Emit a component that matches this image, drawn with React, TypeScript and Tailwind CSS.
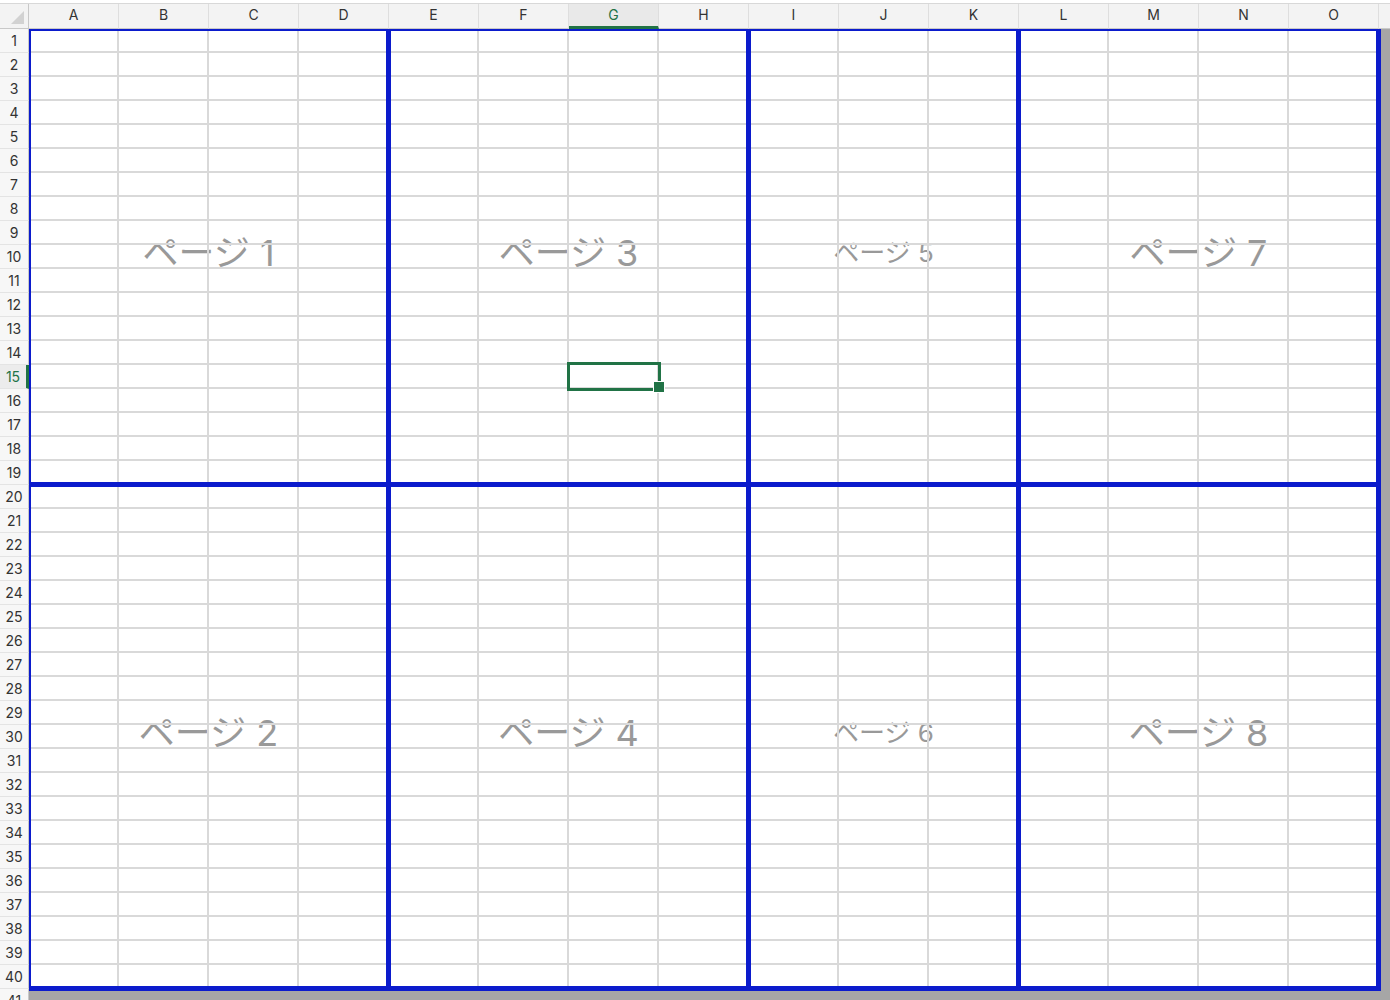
import React from 'react';

const COLS = 'ABCDEFGHIJKLMNO'.split('');
const ROW_COUNT = 41;
const SEL_ROW = 15;
const SEL_COL = 6; // G

// page grid: columns A-D, E-H, I-K, L-O ; rows 1-19, 20-40
const PAGES = [
  { n: 1, small: false }, { n: 3, small: false }, { n: 5, small: true }, { n: 7, small: false },
  { n: 2, small: false }, { n: 4, small: false }, { n: 6, small: true }, { n: 8, small: false },
];

function Corner() {
  return (
    <div className="relative w-[29px] shrink-0 border-r border-b border-[#c8c8c8] bg-[#f3f3f3]">
      <svg className="absolute right-[4px] bottom-[4px]" width="13" height="13" viewBox="0 0 13 13">
        <polygon points="13,0 13,13 0,13" fill="#d2d2d2" />
      </svg>
    </div>
  );
}

function ColumnHeader() {
  return (
    <div className="mt-[3px] h-[26px] shrink-0 flex border-t border-[#d8d8d8] bg-[#f3f3f3]">
      <Corner />
      {COLS.map((c, i) =>
        i === SEL_COL ? (
          <div
            key={c}
            className="w-[90px] shrink-0 flex items-center justify-center pb-[1px] border-r border-[#dedede] border-b-[3px] border-b-[#217346] bg-[#e9e9e9] text-[14px] text-[#217346]"
          >
            {c}
          </div>
        ) : (
          <div
            key={c}
            className="w-[90px] shrink-0 flex items-center justify-center pb-[3px] border-r border-[#dedede] border-b border-b-[#c8c8c8] text-[14px] text-[#333]"
          >
            {c}
          </div>
        ),
      )}
      <div className="w-[90px] shrink-0 border-b border-[#c8c8c8]" />
    </div>
  );
}

function RowHeader() {
  return (
    <div className="w-[29px] shrink-0 flex flex-col bg-[#f7f7f7]">
      {Array.from({ length: ROW_COUNT + 1 }, (_, i) => i + 1).map((r) =>
        r === SEL_ROW ? (
          <div
            key={r}
            className="h-[24px] shrink-0 flex items-center justify-center border-r-[3px] border-[#217346] border-b border-b-[#e4e4e4] bg-[#ececec] text-[14px] text-[#217346]"
          >
            {r}
          </div>
        ) : (
          <div
            key={r}
            className="h-[24px] shrink-0 flex items-center justify-center border-r border-[#c8c8c8] border-b border-b-[#e4e4e4] text-[14px] text-[#333]"
          >
            {r}
          </div>
        ),
      )}
    </div>
  );
}

function Cell({ row, col }: { row: number; col: number }) {
  if (row > 40 || col > 14) {
    return <div className="w-[90px] h-[24px] shrink-0 bg-[#a6a6a6]" />;
  }
  const selected = row === SEL_ROW && col === SEL_COL;
  return (
    <div
      className={
        'relative w-[90px] h-[24px] shrink-0 border-r-2 border-b-2 border-[#d9d9d9] ' + (selected ? 'z-10' : '')
      }
    >
      {selected && (
        <>
          <div className="absolute -left-[2px] -top-[3px] w-[94px] h-[29px] border-[3px] border-[#217346]" />
          <div className="absolute left-[84px] top-[16px] w-[12px] h-[12px] border-[1.5px] border-white bg-[#217346]" />
        </>
      )}
    </div>
  );
}

function PageGrid({ labels }: { labels: boolean }) {
  return (
    <div
      className={
        'absolute -left-[3px] -top-[3px] w-[1355px] h-[965px] grid grid-cols-[360px_360px_270px_360px] grid-rows-[456px_504px] border-l-[5px] border-t-[5px] ' +
        (labels ? 'border-transparent z-0' : 'border-[#0b1bcc] z-20')
      }
    >
      {PAGES.map((p) => (
        <div
          key={p.n}
          className={
            'flex items-center justify-center pb-[8px] border-r-[5px] border-b-[5px] ' +
            (labels ? 'border-transparent' : 'border-[#0b1bcc]')
          }
        >
          {labels && (
            <span
              className={
                "font-['Inter','Noto_Sans_CJK_JP',sans-serif] font-normal text-[#999999] leading-none " +
                (p.small ? 'text-[26px]' : 'text-[36px]')
              }
            >
              ページ {p.n}
            </span>
          )}
        </div>
      ))}
    </div>
  );
}

export default function App() {
  return (
    <div className="w-[1390px] h-[1000px] overflow-hidden bg-white flex flex-col font-['Inter','Noto_Sans_CJK_JP',sans-serif]">
      <ColumnHeader />
      <div className="flex flex-1 min-h-0">
        <RowHeader />
        <div className="relative flex-1 overflow-hidden bg-white">
          <PageGrid labels />
          <div className="relative z-10 flex flex-col">
            {Array.from({ length: ROW_COUNT }, (_, r) => (
              <div key={r} className="flex">
                {Array.from({ length: 16 }, (_, c) => (
                  <Cell key={c} row={r + 1} col={c} />
                ))}
              </div>
            ))}
          </div>
          <PageGrid labels={false} />
        </div>
      </div>
    </div>
  );
}
